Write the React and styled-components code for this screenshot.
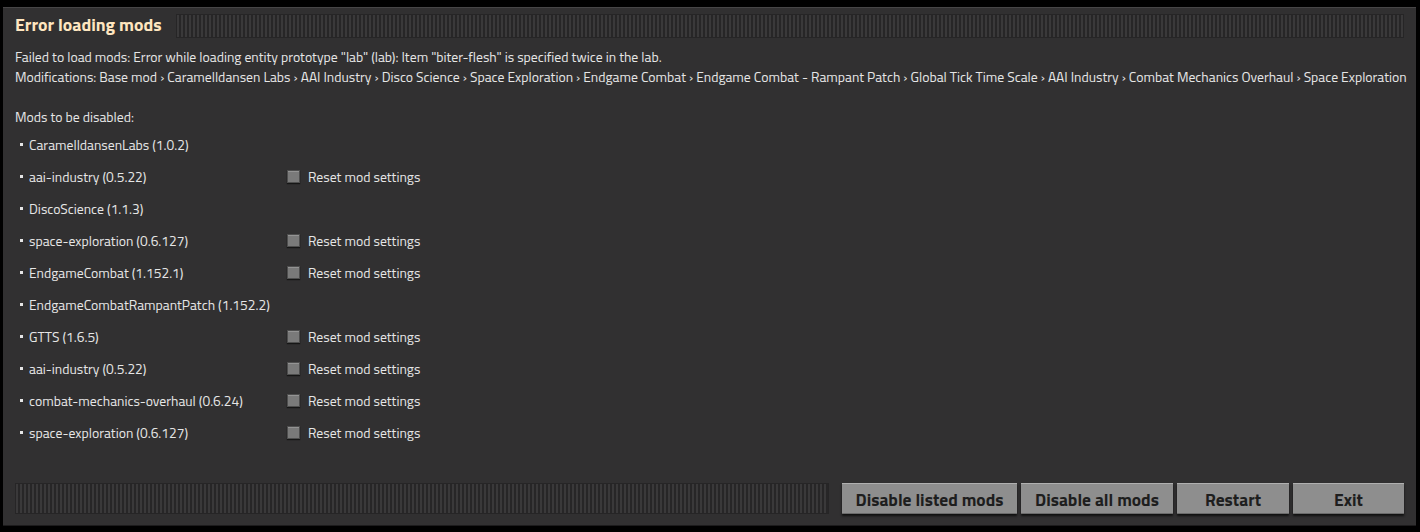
import React from "react";
import styled, { createGlobalStyle } from "styled-components";

const mods = [
  { name: "CaramelldansenLabs", version: "1.0.2", reset: false },
  { name: "aai-industry", version: "0.5.22", reset: true },
  { name: "DiscoScience", version: "1.1.3", reset: false },
  { name: "space-exploration", version: "0.6.127", reset: true },
  { name: "EndgameCombat", version: "1.152.1", reset: true },
  { name: "EndgameCombatRampantPatch", version: "1.152.2", reset: false },
  { name: "GTTS", version: "1.6.5", reset: true },
  { name: "aai-industry", version: "0.5.22", reset: true },
  { name: "combat-mechanics-overhaul", version: "0.6.24", reset: true },
  { name: "space-exploration", version: "0.6.127", reset: true },
];

const chain = [
  "Base mod",
  "Caramelldansen Labs",
  "AAI Industry",
  "Disco Science",
  "Space Exploration",
  "Endgame Combat",
  "Endgame Combat - Rampant Patch",
  "Global Tick Time Scale",
  "AAI Industry",
  "Combat Mechanics Overhaul",
  "Space Exploration",
];

const buttons = [
  { label: "Disable listed mods", width: 175 },
  { label: "Disable all mods", width: 152 },
  { label: "Restart", width: 112 },
  { label: "Exit", width: 111 },
];

const App = () => {
  return (
    <>
      <GlobalStyle />
      <Frame>
        <TitleBar>
          <Title>Error loading mods</Title>
          <Grip />
        </TitleBar>
        <Content>
          <Line>
            Failed to load mods: Error while loading entity prototype "lab" (lab): Item
            "biter-flesh" is specified twice in the lab.
          </Line>
          <Line>Modifications: {chain.join(" › ")}</Line>
          <Heading>Mods to be disabled:</Heading>
          <ModList>
            {mods.map((mod, i) => (
              <ModRow key={i}>
                <ModName>
                  {mod.name} ({mod.version})
                </ModName>
                {mod.reset && (
                  <ResetOption>
                    <CheckBox />
                    Reset mod settings
                  </ResetOption>
                )}
              </ModRow>
            ))}
          </ModList>
        </Content>
        <Footer>
          <Grip $height={31} />
          <ButtonGroup>
            {buttons.map((b) => (
              <Button key={b.label} $width={b.width}>
                {b.label}
              </Button>
            ))}
          </ButtonGroup>
        </Footer>
      </Frame>
    </>
  );
};

const GlobalStyle = createGlobalStyle`
  html, body {
    margin: 0;
    padding: 0;
    background: #000;
  }
  body {
    font-family: "Titillium Web", "Open Sans", "Noto Sans", sans-serif;
    overflow: hidden;
  }
`;

const Frame = styled.div`
  box-sizing: border-box;
  margin: 7px 4px 0 3px;
  width: 1413px;
  height: 519px;
  background: #313031;
  border-top: 1px solid #464546;
  box-shadow: inset 0 -1px 0 #1c1b1c;
  display: flex;
  flex-direction: column;
`;

const TitleBar = styled.div`
  display: flex;
  align-items: center;
  height: 36px;
  padding: 0 12px 0 12px;
`;

const Title = styled.h1`
  margin: 0 14px 3px 0;
  font-size: 17.8px;
  font-weight: 700;
  color: #ffe6c0;
`;

const Grip = styled.div`
  flex: 1;
  height: ${(p) => p.$height || 24}px;
  box-sizing: border-box;
  border: 1px solid #262526;
  background: repeating-linear-gradient(
    90deg,
    #3a393a 0px,
    #3a393a 2px,
    #272627 2px,
    #272627 4px
  );
`;

const Content = styled.div`
  flex: 1;
  padding: 3px 12px 0 12px;
  color: #e6e6e6;
  font-size: 13.75px;
`;

const Line = styled.div`
  line-height: 20px;
  white-space: nowrap;
`;

const Heading = styled.div`
  margin-top: 20px;
  line-height: 20px;
`;

const ModList = styled.ul`
  list-style: none;
  margin: 1px 0 0 0;
  padding: 0;
`;

const ModRow = styled.li`
  display: grid;
  grid-template-columns: 272px auto;
  align-items: center;
  height: 32px;
`;

const ModName = styled.span`
  position: relative;
  padding-left: 14px;
  &::before {
    content: "";
    position: absolute;
    left: 5px;
    top: 50%;
    width: 3px;
    height: 3px;
    margin-top: -1px;
    background: #e6e6e6;
  }
`;

const ResetOption = styled.label`
  display: flex;
  align-items: center;
  gap: 8px;
`;

const CheckBox = styled.span`
  box-sizing: border-box;
  width: 13px;
  height: 13px;
  background: #7a7a7a;
  border: 1px solid #4e4e4e;
  box-shadow: 0 1px 1px #161616, inset 0 1px 0 #949494;
`;

const Footer = styled.div`
  display: flex;
  align-items: center;
  gap: 13px;
  height: 31px;
  padding: 0 12px 12px 12px;
`;

const ButtonGroup = styled.div`
  display: flex;
  gap: 4px;
`;

const Button = styled.button`
  box-sizing: border-box;
  width: ${(p) => p.$width}px;
  height: 31px;
  background: #8e8e8e;
  border: none;
  border-top: 1px solid #b0b0b0;
  box-shadow: 0 2px 2px #111, inset 0 -1px 0 #6a6a6a;
  color: #1e1e1e;
  font-family: "Titillium Web", "Open Sans", "Noto Sans", sans-serif;
  font-size: 17.5px;
  font-weight: 700;
  padding: 0;
`;

export default App;
